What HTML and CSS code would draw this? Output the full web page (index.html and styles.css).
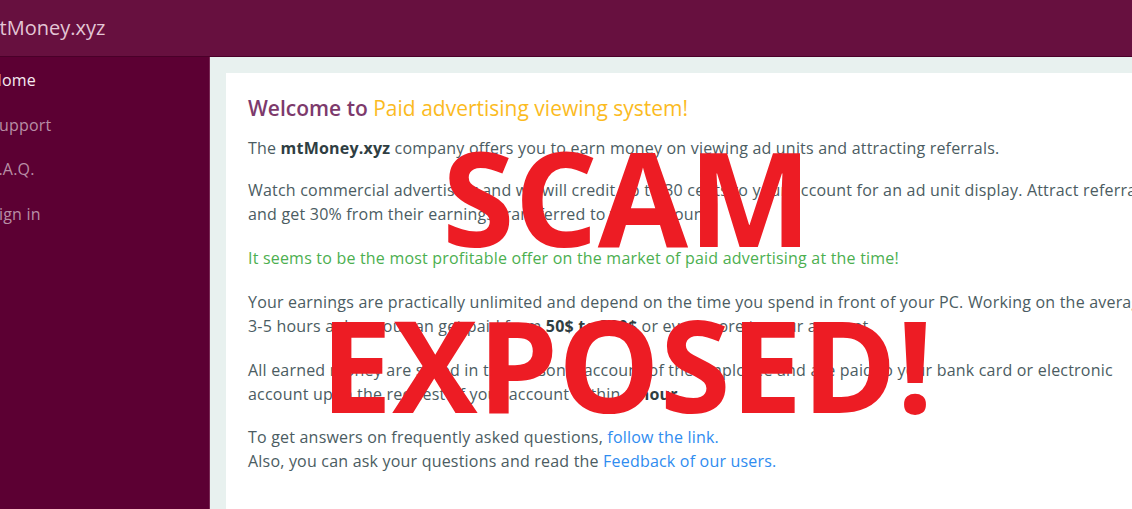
FILE: index.html
```html
<!DOCTYPE html>
<html lang="en">
<head>
<meta charset="utf-8">
<title>mtMoney.xyz</title>
<link rel="stylesheet" href="styles.css">
</head>
<body>
<div class="page">
  <header class="topbar">
    <span class="brand">mtMoney.xyz</span>
  </header>
  <div class="layout">
    <nav class="sidebar">
      <a class="nav-item active" href="#">Home</a>
      <a class="nav-item" href="#">Support</a>
      <a class="nav-item" href="#">F.A.Q.</a>
      <a class="nav-item" href="#">Sign in</a>
    </nav>
    <main class="content">
      <section class="card">
        <h1 class="title"><span class="title-a">Welcome to</span> <span class="title-b">Paid advertising viewing system!</span></h1>
        <p class="first">The <b>mtMoney.xyz</b> company offers you to earn money on viewing ad units and attracting referrals.</p>
        <p>Watch commercial advertising and we will credit up to 30 cents to your account for an ad unit display. Attract referrals and get 30% from their earnings transferred to your account.</p>
        <p class="green">It seems to be the most profitable offer on the market of paid advertising at the time!</p>
        <p>Your earnings are practically unlimited and depend on the time you spend in front of your PC. Working on the average 3-5 hours a day, you can get paid from <b>50$ to 300$</b> or even more to your account.</p>
        <p class="tight">All earned money are saved in the personal account of the employee and are paid to your bank card or electronic account upon the request of your account within <b>1 hour</b>.</p>
        <p>To get answers on frequently asked questions, <a class="link" href="#">follow the link.</a><br>Also, you can ask your questions and read the <a class="link" href="#">Feedback of our users.</a></p>
      </section>
    </main>
  </div>
  <div class="stamp">
    <div class="stamp-line stamp-1">SCAM</div>
    <div class="stamp-line stamp-2">EXPOSED!</div>
  </div>
</div>
</body>
</html>
```

FILE: styles.css
```css
* { box-sizing: border-box; }
html, body {
  margin: 0;
  padding: 0;
  width: 1132px;
  height: 509px;
  overflow: hidden;
  background: #e8f1ef;
}
body {
  font-family: "Open Sans", "Noto Sans", sans-serif;
}
.page {
  position: relative;
  width: 1132px;
  height: 509px;
  overflow: hidden;
}
.topbar {
  height: 57px;
  background: #67103f;
  border-bottom: 1px solid #4a0029;
  display: flex;
  align-items: center;
}
.brand {
  margin-left: -19px;
  margin-top: -1px;
  font-size: 20px;
  color: #e3c6d5;
}
.layout {
  display: flex;
  height: 452px;
}
.sidebar {
  width: 210px;
  flex: none;
  background: #5c0033;
  border-right: 1px solid #7a2a55;
  display: flex;
  flex-direction: column;
  padding-top: 11px;
}
.nav-item {
  display: block;
  margin-left: -10px;
  height: 44.5px;
  line-height: 24px;
  font-size: 16px;
  letter-spacing: 0.2px;
  color: #b88ea5;
  text-decoration: none;
}
.nav-item.active { color: #f6ecf1; }
.content {
  flex: 1;
  min-width: 0;
  background: #e8f1ef;
  padding: 16px 0 0 16px;
}
.card {
  width: 956px;
  height: 480px;
  background: #fff;
  padding: 22px 22px 0 22px;
  color: #4b5c62;
  font-size: 16px;
  line-height: 24px;
  letter-spacing: 0.2px;
}
.title {
  margin: 0 0 15px 0;
  font-size: 21px;
  font-weight: 600;
  line-height: 26px;
  letter-spacing: 0;
}
.title-a { color: #7d3a6c; }
.title-b { color: #fbbb1f; font-weight: 500; }
.card p { margin: 0 0 20px 0; }
.card p.first { margin-bottom: 18px; }
.card p.tight { margin-bottom: 19px; }
.card b { color: #2f3e42; font-weight: 700; }
.green { color: #4caf50; }
.link { color: #2f8cf0; text-decoration: none; }
.stamp {
  position: absolute;
  left: 277px;
  top: 112px;
  width: 700px;
  text-align: center;
  color: #ed1c24;
  font-family: "Open Sans", "Noto Sans", sans-serif;
  font-weight: 700;
  font-size: 128px;
  line-height: 168px;
  pointer-events: none;
}
.stamp-line { white-space: nowrap; }
.stamp-1 { font-size: 131px; }
```
